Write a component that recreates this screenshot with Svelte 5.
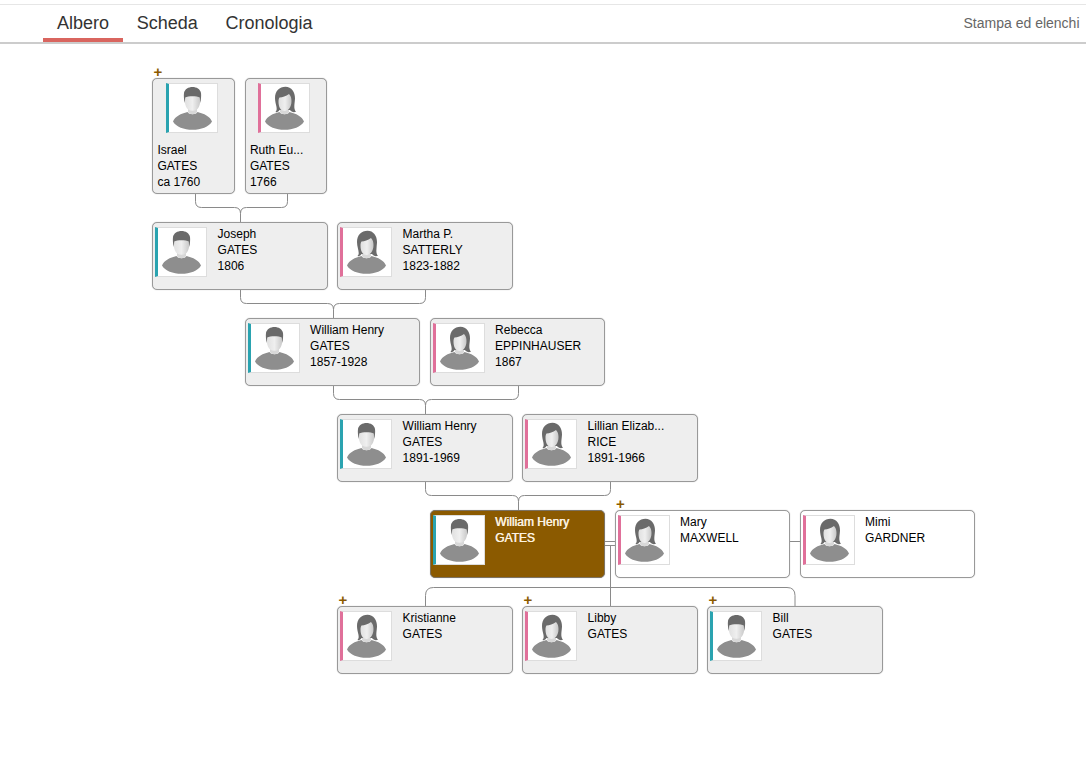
<script>
    const tabs = ["Albero", "Scheda", "Cronologia"];

    // cards sit on a 92.5px column step, so x values stay fractional
    const people = [
        { x: 152.4, y: 78, sex: "m", lines: ["Israel", "GATES", "ca 1760"], small: true, plus: true },
        { x: 244.9, y: 78, sex: "f", lines: ["Ruth Eu...", "GATES", "1766"], small: true },
        { x: 152.4, y: 222, sex: "m", lines: ["Joseph", "GATES", "1806"] },
        { x: 337.4, y: 222, sex: "f", lines: ["Martha P.", "SATTERLY", "1823-1882"] },
        { x: 244.9, y: 318, sex: "m", lines: ["William Henry", "GATES", "1857-1928"] },
        { x: 429.9, y: 318, sex: "f", lines: ["Rebecca", "EPPINHAUSER", "1867"] },
        { x: 337.4, y: 414, sex: "m", lines: ["William Henry", "GATES", "1891-1969"] },
        { x: 522.4, y: 414, sex: "f", lines: ["Lillian Elizab...", "RICE", "1891-1966"] },
        { x: 429.9, y: 510, sex: "m", lines: ["William Henry", "GATES"], focus: true },
        { x: 614.9, y: 510, sex: "f", lines: ["Mary", "MAXWELL"], spouse: true, plus: true },
        { x: 799.9, y: 510, sex: "f", lines: ["Mimi", "GARDNER"], spouse: true },
        { x: 337.4, y: 606, sex: "f", lines: ["Kristianne", "GATES"], plus: true },
        { x: 522.4, y: 606, sex: "f", lines: ["Libby", "GATES"], plus: true },
        { x: 707.4, y: 606, sex: "m", lines: ["Bill", "GATES"], plus: true }
    ];

    // left end, right end, top of the brace, joint x, bottom of the joint
    const braces = [
        [195.5, 287.5, 193, 240.5, 222],
        [240.5, 425.5, 289, 333.5, 318],
        [333.5, 518.5, 385, 425.5, 414],
        [425.5, 610.5, 481, 518.5, 510]
    ];

    function brace([a, b, top, joint, bottom]) {
        const y = top + 14.5;
        return `M${a} ${top}V${y - 6}Q${a} ${y} ${a + 6} ${y}H${joint - 6}Q${joint} ${y} ${joint} ${y + 6}V${bottom}` +
            `M${b} ${top}V${y - 6}Q${b} ${y} ${b - 6} ${y}H${joint + 6}Q${joint} ${y} ${joint} ${y + 6}`;
    }
</script>

{#snippet avatar(sex)}
    <svg class="avatar" viewBox="3 1 48 48" width="48" height="48">
        <path class="body" d="M7 38.5C9 33.5 15 30.5 21.5 29C23 32 30 32 31.5 29C38 30.5 44 33.5 46 38.5C43 44 35 46.8 26.5 46.8C18 46.8 10 44 7 38.5Z" />
        <path d="M22 22H31V29C30 32 23 32 22 29Z" fill="#d8d8d8" />
        {#if sex === "m"}
            <path d="M18.6 12.5H34.4C34.6 22 33 27.8 26.5 27.8C20 27.8 18.4 22 18.6 12.5Z" fill="url(#face)" />
            <path class="hair" d="M18.8 20C18 16.5 17.6 13 18 10C18.8 6 22.5 4 26.5 4C30.5 4 34.2 6 35 10C35.4 13 35 16.5 34.2 20L33.8 14.5C31 12.8 22 12.8 19.2 14.5Z" />
        {:else}
            <path class="hair" d="M17.5 29C20.5 26 17 21.5 17 15C17 8 21.5 3.8 27.5 3.8C33.5 3.8 37.2 9 37 15.5C36.8 20.5 35.2 25.5 38 28.8C35.5 29.6 33.5 29 32 27L21.5 27C20.5 28.8 19 29.6 17.5 29Z" />
            <path d="M20.5 18.5C20.5 24 22.5 28 26.5 28C30.5 28 33.5 24 33.5 18C33.5 15 32.8 12.8 31 11C28 13.2 24.5 14.2 21.5 14.6C20.8 15.6 20.5 17 20.5 18.5Z" fill="url(#face)" />
        {/if}
    </svg>
{/snippet}

<header class="bar">
    <nav class="tabs">
        {#each tabs as tab, i}
            <span class="tab" class:active={i === 0}>{tab}</span>
        {/each}
    </nav>
    <span class="print">Stampa ed elenchi</span>
</header>

<main class="tree">
    <svg class="lines" width="1086" height="736" viewBox="0 44 1086 736">
        <defs>
            <linearGradient id="face" x1="0" x2="1" y1="0" y2="0">
                <stop offset="0" stop-color="#e0e0e0" />
                <stop offset="0.5" stop-color="#efefef" />
                <stop offset="1" stop-color="#c8c8c8" />
            </linearGradient>
        </defs>
        {#each braces as b}
            <path d={brace(b)} />
        {/each}
        <path d="M605 541.5H615M605 545.5H615M610.5 545.5V606M790 541.5H800" />
        <path d="M425.5 606V595.5Q425.5 587.5 433.5 587.5H787Q795 587.5 795 595.5V606" />
    </svg>

    {#each people as p}
        <article
            class="card"
            class:small={p.small}
            class:focus={p.focus}
            class:spouse={p.spouse}
            style="left: {p.x}px; top: {p.y}px"
        >
            {#if p.plus}<span class="plus">+</span>{/if}
            <div class="photo {p.sex}">
                {@render avatar(p.sex)}
            </div>
            <div class="info">
                {#each p.lines as line}
                    <div>{line}</div>
                {/each}
            </div>
        </article>
    {/each}
</main>

<style>
    :global(body) {
        background: #fff;
        font-family: "Liberation Sans", Arial, sans-serif;
    }

    .bar {
        display: flex;
        align-items: stretch;
        justify-content: space-between;
        box-sizing: border-box;
        height: 40px;
        border-top: 1px solid #e6e6e6;
        border-bottom: 2px solid #ccc;
        margin-top: 4px;
        padding: 0 6.5px 0 43px;
    }

    .tabs {
        display: flex;
    }

    .tab {
        box-sizing: border-box;
        height: 37px;
        padding: 6px 13.9px 0;
        font-size: 18px;
        line-height: 24px;
        color: #333;
    }

    .tab.active {
        border-bottom: 4px solid #d9655f;
    }

    .print {
        padding-top: 9px;
        font-size: 14px;
        line-height: 18px;
        color: #666;
    }

    .tree {
        position: relative;
        height: 736px;
    }

    .lines {
        position: absolute;
        left: 0;
        top: 0;
        fill: none;
        stroke: #8a8a8a;
        stroke-width: 1;
    }

    .card {
        position: absolute;
        display: flex;
        box-sizing: border-box;
        width: 175.5px;
        height: 68px;
        margin-top: -44px;
        padding: 4px 2px;
        background: #eee;
        border: 1px solid #999;
        border-radius: 5px;
        box-shadow: 0 0 1px #aaa;
        font-size: 12px;
        line-height: 16px;
        color: #000;
    }

    .card.small {
        flex-direction: column;
        width: 82.5px;
        height: 116px;
        padding: 4px;
    }

    .card.spouse {
        background: #fff;
    }

    .card.focus {
        background: #8b5a00;
        border-color: #7d7363;
        color: #fdf3e0;
        text-shadow: 0.4px 0 0 currentColor;
    }

    .plus {
        position: absolute;
        left: 0;
        top: -14px;
        font-size: 15px;
        line-height: 14px;
        font-weight: bold;
        color: #8b5a00;
    }

    .photo {
        flex: none;
        box-sizing: border-box;
        width: 52px;
        height: 50px;
        background: #fff;
        border: 1px solid #ddd;
        border-left: 3px solid;
    }

    .photo.m {
        border-left-color: #2aa3b0;
    }

    .photo.f {
        border-left-color: #e0709a;
    }

    .card.small .photo {
        margin-left: 8.4px;
    }

    .avatar {
        display: block;
    }

    .body {
        fill: #8e8e8e;
    }

    .hair {
        fill: #6a6a6a;
    }

    .info {
        margin: -1px 0 0 10.2px;
        white-space: nowrap;
    }

    .card.small .info {
        margin: 9px 0 0;
    }
</style>
